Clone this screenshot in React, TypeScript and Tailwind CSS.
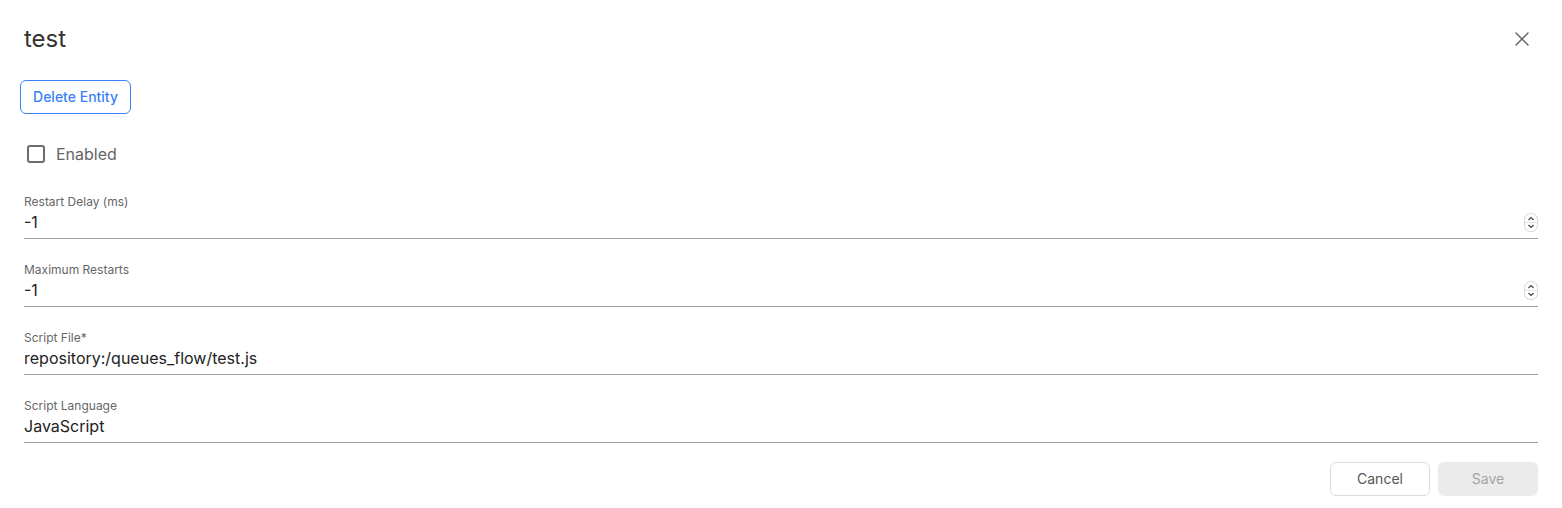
import { X } from "lucide-react";

const fields = [
  { label: "Restart Delay (ms)", value: "-1", spin: true },
  { label: "Maximum Restarts", value: "-1", spin: true },
  { label: "Script File*", value: "repository:/queues_flow/test.js", spin: false },
  { label: "Script Language", value: "JavaScript", spin: false },
];

function Spinner() {
  return (
    <svg width="14" height="19" viewBox="0 0 14 19" className="shrink-0">
      <rect x="0.5" y="0.5" width="13" height="18" rx="6" fill="#fff" stroke="#d4d4d4" />
      <line x1="1" y1="9.5" x2="13" y2="9.5" stroke="#e5e5e5" />
      <path d="M4.5 7 7 4.5 9.5 7" fill="none" stroke="#444" strokeWidth="1.2" />
      <path d="M4.5 12 7 14.5 9.5 12" fill="none" stroke="#444" strokeWidth="1.2" />
    </svg>
  );
}

export default function App() {
  return (
    <div className="w-[1562px] h-[508px] bg-white px-6 font-['Inter',sans-serif] text-[#333]">
      <div className="flex items-center justify-between pt-[23px] h-[54px]">
        <h1 className="text-2xl leading-8 text-[#333]">test</h1>
        <X className="h-6 w-6 mr-1 text-[#666]" strokeWidth={1.5} />
      </div>

      <button className="mt-[26px] -ml-1 h-[34px] w-[111px] rounded-md border border-[#3b82f6] text-sm font-medium text-[#3b82f6]">
        Delete Entity
      </button>

      <label className="mt-[20px] flex h-10 items-center gap-[11px] pl-[3px]">
        <span className="h-[18px] w-[18px] rounded-[3px] border-2 border-[#6b6b6b]" />
        <span className="text-base text-[#666]">Enabled</span>
      </label>

      <div className="mt-[20px] flex flex-col gap-[23px]">
        {fields.map((f) => (
          <div key={f.label} className="border-b border-[#9e9e9e] pb-1">
            <div className="text-xs leading-4 text-[#666]">{f.label}</div>
            <div className="flex h-6 items-center justify-between">
              <span className="text-base text-[#222]">{f.value}</span>
              {f.spin && <Spinner />}
            </div>
          </div>
        ))}
      </div>

      <div className="mt-[19px] flex justify-end gap-2">
        <button className="h-[34px] w-[100px] rounded-md border border-[#dcdcdc] text-sm text-[#555]">Cancel</button>
        <button className="h-[34px] w-[100px] rounded-md bg-[#ebebeb] text-sm text-[#a3a3a3]">Save</button>
      </div>
    </div>
  );
}
